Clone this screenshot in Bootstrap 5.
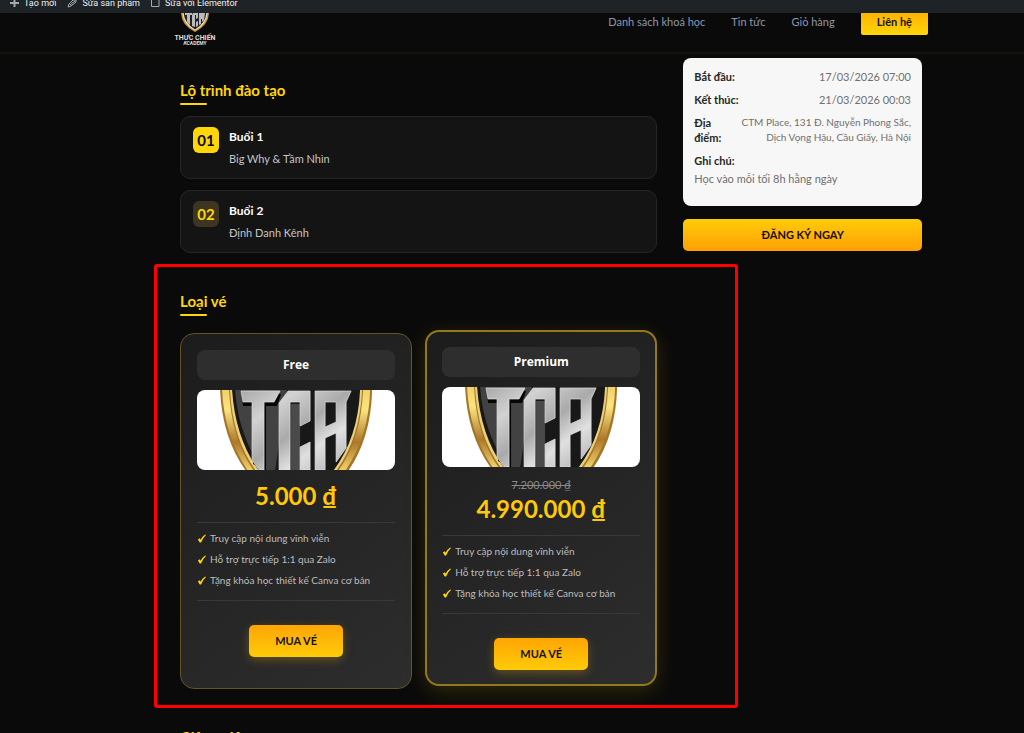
<!DOCTYPE html>
<html lang="vi">
<head>
<meta charset="utf-8">
<meta name="viewport" content="width=device-width, initial-scale=1">
<title>Thực Chiến Academy</title>
<link rel="stylesheet" href="https://cdn.jsdelivr.net/npm/bootstrap@5.3.0/dist/css/bootstrap.min.css">
<script src="https://cdn.jsdelivr.net/npm/bootstrap@5.3.0/dist/js/bootstrap.bundle.min.js" defer></script>
<style>
  :root { --gold: #ffd60a; --ink: #0a0a0a; }
  body { background: var(--ink); color: #c4c4c4; font: 11px/16px Lato, "Open Sans", sans-serif; font-variant-ligatures: none; height: 100vh; overflow: hidden; }
  a { text-decoration: none; }
  .admin-bar { background: #1d2327; height: 13px; font: 9px/12px Roboto, sans-serif; padding-left: 10px; gap: 11px; }
  .admin-bar a { color: #f0f0f1; gap: 5px; height: 6px; }
  .site-header { height: 41px; border-bottom: 2px solid #17130c; padding: 0 96px 0 174px; }
  .site-header .brand-mark { width: 42px; height: 34px; }
  .site-nav { gap: 26px; }
  .site-nav a { color: #8d98aa; line-height: 18px; }
  .site-nav .contact { background: linear-gradient(#ffb300, #ffd60a); color: #17130a; font-weight: 700; border-radius: 0 0 2px 2px; padding: 0 16px; height: 22px; }
  .page-grid { display: grid; grid-template-columns: minmax(0, 2fr) minmax(0, 1fr); column-gap: 26px; align-items: start; padding: 4px 102px 0 180px; }
  .roadmap { padding-top: 22px; }
  .section-title { color: var(--gold); font-size: 15px; line-height: 20px; font-weight: 700; margin: 0; }
  .section-title::after { content: ""; display: block; width: 27px; height: 2px; border-radius: 1px; background: var(--gold); margin-top: 3px; }
  .lesson-list { gap: 11px; margin-top: 11px; }
  .lesson { background: #141414; border: 1px solid #262626; border-radius: 10px; padding: 10px 12px; gap: 10px; height: 63px; }
  .lesson h3 { color: #fff; font-size: 12px; line-height: 20px; font-weight: 700; margin: 0 0 4px; }
  .step { width: 26px; height: 26px; border-radius: 6px; font-size: 15px; font-weight: 700; background: #3d3520; color: var(--gold); }
  .step.current { background: var(--gold); color: var(--ink); }
  .info { background: #f7f7f7; border-radius: 8px; color: #707070; padding: 11px; height: 148px; line-height: 15px; }
  .info dt { color: #262626; }
  .info-row { gap: 8px; margin-bottom: 8px; }
  .info-row.place dt { flex: 0 0 32px; }
  .info-row.place dd { flex: 1 1 0; font-size: 10px; }
  .note dd { margin-top: 3px; }
  .register { background: linear-gradient(#ffcc08, #ff9f05); color: #140f05; font-weight: 700; border: 0; border-radius: 5px; height: 32px; margin-top: 13px; }
  .highlight { border: 3px solid red; border-radius: 3px; margin: 11px -81px 0 -26px; padding: 24px 78px 16px 23px; }
  .tickets { display: grid; grid-template-columns: 1fr 1fr; gap: 13px; margin-top: 14px; }
  .ticket { background: linear-gradient(145deg, #1c1c1c, #2d2d2d); border: 1px solid #655421; border-radius: 14px; padding: 16px; height: 356px; margin-top: 3px; }
  .ticket.featured { border: 2px solid #957819; padding: 15px; box-shadow: 0 5px 20px #ffd60a28; margin: 0 0 3px; }
  .ticket h3 { background: #2e2e2e; color: #fff; border-radius: 8px; font: 700 12px/30px "Open Sans", sans-serif; margin: 0 0 10px; }
  .emblem { height: 80px; border-radius: 8px; background: #fff; }
  .old-price { color: #8a8a8a; font-size: 11px; line-height: 12px; margin-top: 12px; }
  .price { color: #ffc90a; font-size: 24px; font-weight: 700; line-height: 26px; margin-top: 13px; }
  .old-price + .price { margin-top: 5px; }
  .benefits { border: solid #393939; border-width: 1px 0; margin: 13px 0 24px; padding: 6px 0 8px; font-size: 10px; color: #bdbdbd; }
  .benefits li { line-height: 18px; margin-bottom: 3px; gap: 4px; }
  .buy { border: 0; background: linear-gradient(#ffa505, #ffcb08); color: #17130a; font-weight: 700; border-radius: 5px; width: 94px; height: 32px; box-shadow: 0 3px 10px #ffc10744; }
  .teachers { padding-top: 19px; }
</style>
</head>
<body>
<svg class="d-none" aria-hidden="true">
  <defs>
    <symbol id="check" viewBox="0 0 10 10"><path fill="#ffd60a" d="M1 6L3 4.700 4 6.300Q5.500 3 9 .5L10 1Q6.500 4 4.500 9.500H3Z"/></symbol>
  </defs>
</svg>
<nav class="admin-bar d-flex align-items-start" aria-label="Quản trị">
  <a href="#" class="d-flex align-items-center"><svg width="9" height="9"><path d="M4.500 0V8M0 4H9" stroke="#a7aaad" stroke-width="2"/></svg><span>Tạo mới</span></a>
  <a href="#" class="d-flex align-items-center"><svg width="10" height="9" fill="none" stroke="#a7aaad"><path d="M1 8L2 5 6 1 9 1 9 3 4 7Z M3 6L8 2"/></svg><span>Sửa sản phẩm</span></a>
  <a href="#" class="d-flex align-items-center"><svg width="9" height="9" fill="none" stroke="#a7aaad"><path d="M.5 0V7.500H8V0"/></svg><span>Sửa với Elementor</span></a>
</nav>
<header class="site-header d-flex justify-content-between align-items-start">
  <a href="#" aria-label="Thực Chiến Academy"><svg class="brand-mark" viewBox="0 0 42 34">
    <path fill="#d39a32" d="M7-1H35Q35 12 21 19Q7 12 7-1"/><path fill="#eee" d="M8.500-1H33.500Q33 11 21 17.500Q9 11 8.500-1"/><path fill="#222" d="M9.500-1H32.500Q32 10 21 16.500Q10 10 9.500-1"/>
    <path fill="#bbb" d="M11 0H18V2H16V12L13 9V2H11Z M19 0H24V5L22 6V2H21V14L18 13V2Z M22 9L24 8V13L22 14Z M25 0H31L30 7L28 9V6H27V11L25 12Z"/>
    <text x="21" y="27" text-anchor="middle" fill="#ddd" font-family="Roboto, sans-serif" font-size="7" font-weight="700">THỰC CHIẾN</text>
    <text x="21" y="32" text-anchor="middle" fill="#ddd" font-family="Roboto, sans-serif" font-size="5" font-weight="700">ACADEMY</text>
  </svg></a>
  <nav class="site-nav d-flex"><a href="#">Danh sách khoá học</a><a href="#">Tin tức</a><a href="#">Giỏ hàng</a><a href="#" class="contact">Liên hệ</a></nav>
</header>
<main class="page-grid">
  <div>
    <section class="roadmap">
      <h2 class="section-title">Lộ trình đào tạo</h2>
      <div class="lesson-list d-grid">
        <article class="lesson d-flex"><div class="step current d-flex align-items-center justify-content-center">01</div><div><h3>Buổi 1</h3>Big Why &amp; Tầm Nhìn</div></article>
        <article class="lesson d-flex"><div class="step d-flex align-items-center justify-content-center">02</div><div><h3>Buổi 2</h3>Định Danh Kênh</div></article>
      </div>
    </section>
    <section class="highlight">
      <h2 class="section-title">Loại vé</h2>
      <div class="tickets">
        <article class="ticket text-center">
          <h3>Free</h3>
          <svg class="emblem d-block w-100" viewBox="0 0 198 80" preserveAspectRatio="xMidYMid slice" role="img" aria-label="TCA">
            <defs>
              <linearGradient id="gold" x1="0" y1="0" x2="0" y2="1"><stop stop-color="#efd06b"/><stop offset=".25" stop-color="#fae57f"/><stop offset=".65" stop-color="#ad792a"/><stop offset="1" stop-color="#f1d36c"/></linearGradient>
              <linearGradient id="steel" x1="0" y1="0" x2="1" y2="1"><stop stop-color="#aaa"/><stop offset=".25" stop-color="#d2d2d2"/><stop offset=".5" stop-color="#aaa"/><stop offset=".7" stop-color="#e0e0e0"/><stop offset="1" stop-color="#aaa"/></linearGradient>
              <g id="tca">
                <path fill="#a5752a" d="M23-1H175Q174 48 151 81H49Q25 48 23-1"/>
                <path fill="url(#gold)" d="M25-1H173Q172 46 148 81H51Q27 46 25-1"/>
                <path fill="#a5752a" d="M32-1H166Q164 49 141 81H57Q34 49 32-1"/>
                <path fill="#ecd078" d="M33-1H165Q163 48 139 81H59Q35 48 33-1"/>
                <path fill="#181818" d="M35-1H163Q161 48 136 81H62Q38 48 35-1"/>
                <path fill="#424242" d="M38-1H90L78 81H66Q41 45 38-1"/>
                <path fill="#4a4a4a" d="M94 14H103V81H94Z"/>
                <path fill="#050505" d="M45 4H84L80 16H69V81L56 74V16H46Z"/>
                <path fill="url(#steel)" fill-rule="evenodd" stroke="#e3e3e3" stroke-width=".7" d="M44 1H83L77 12H67V80H62L55 70V12H46Z M91 1H113V31L103 36V12H93V80H82V13Z M103 57L113 52V80H103Z M118 1H154L149 12V58L139 72V43L128 48V80H118Z M128 12V37L139 32V12Z"/>
              </g>
            </defs>
            <use href="#tca"/>
          </svg>
          <div class="price">5.000 ₫</div>
          <ul class="benefits list-unstyled text-start">
            <li class="d-flex align-items-center"><svg width="9" height="9"><use href="#check" width="9" height="9"/></svg>Truy cập nội dung vĩnh viễn</li>
            <li class="d-flex align-items-center"><svg width="9" height="9"><use href="#check" width="9" height="9"/></svg>Hỗ trợ trực tiếp 1:1 qua Zalo</li>
            <li class="d-flex align-items-center"><svg width="9" height="9"><use href="#check" width="9" height="9"/></svg>Tặng khóa học thiết kế Canva cơ bản</li>
          </ul>
          <button type="button" class="buy">MUA VÉ</button>
        </article>
        <article class="ticket featured text-center">
          <h3>Premium</h3>
          <svg class="emblem d-block w-100" viewBox="0 0 198 80" preserveAspectRatio="xMidYMid slice" role="img" aria-label="TCA"><use href="#tca"/></svg>
          <div class="old-price"><del>7.200.000 ₫</del></div>
          <div class="price">4.990.000 ₫</div>
          <ul class="benefits list-unstyled text-start">
            <li class="d-flex align-items-center"><svg width="9" height="9"><use href="#check" width="9" height="9"/></svg>Truy cập nội dung vĩnh viễn</li>
            <li class="d-flex align-items-center"><svg width="9" height="9"><use href="#check" width="9" height="9"/></svg>Hỗ trợ trực tiếp 1:1 qua Zalo</li>
            <li class="d-flex align-items-center"><svg width="9" height="9"><use href="#check" width="9" height="9"/></svg>Tặng khóa học thiết kế Canva cơ bản</li>
          </ul>
          <button type="button" class="buy">MUA VÉ</button>
        </article>
      </div>
    </section>
    <section class="teachers"><h2 class="section-title">Giảng viên</h2></section>
  </div>
  <aside>
    <dl class="info m-0">
      <div class="info-row d-flex justify-content-between"><dt>Bắt đầu:</dt><dd class="mb-0">17/03/2026 07:00</dd></div>
      <div class="info-row d-flex justify-content-between"><dt>Kết thúc:</dt><dd class="mb-0">21/03/2026 00:03</dd></div>
      <div class="info-row place d-flex justify-content-between"><dt>Địa điểm:</dt><dd class="mb-0 text-end">CTM Place, 131 Đ. Nguyễn Phong Sắc, Dịch Vọng Hậu, Cầu Giấy, Hà Nội</dd></div>
      <div class="note"><dt>Ghi chú:</dt><dd class="mb-0">Học vào mỗi tối 8h hằng ngày</dd></div>
    </dl>
    <button type="button" class="register w-100">ĐĂNG KÝ NGAY</button>
  </aside>
</main>
</body>
</html>
